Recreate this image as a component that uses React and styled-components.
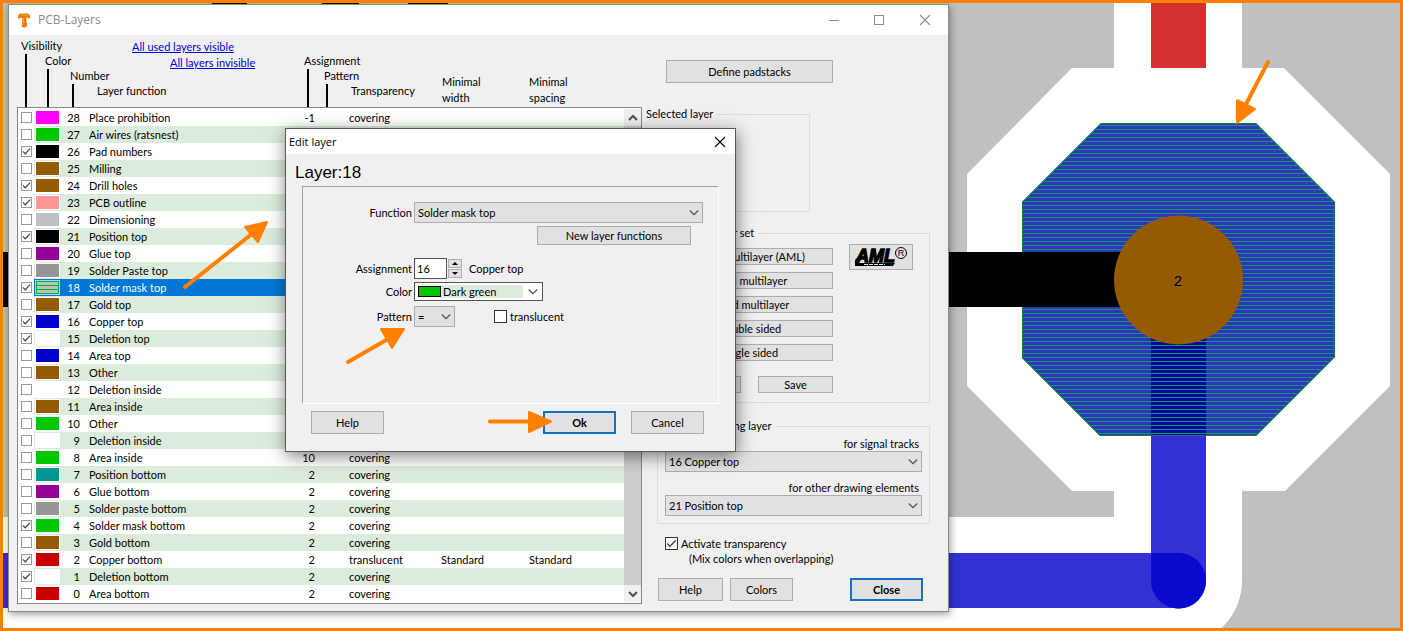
import React from "react";
import styled, { createGlobalStyle, css } from "styled-components";

const GlobalStyle = createGlobalStyle`
  *, *::before, *::after { box-sizing: border-box; }
  body {
    margin: 0;
    background: #c0c0c0;
    font: 11px/14px Lato, "Liberation Sans", Arial, sans-serif;
    color: #000;
  }
  button, input, select { font: inherit; color: inherit; margin: 0; }
`;

const ACCENT = "#ff8000";

/* ---------- desktop ---------- */

const Desktop = styled.main`
  position: relative;
  min-height: 100vh;
  border: 3px solid ${ACCENT};
  background: #c0c0c0;
  overflow: hidden;
`;

const Layer = styled.svg`
  position: absolute;
  left: -3px;
  top: -3px;
  width: calc(100% + 6px);
  height: calc(100% + 6px);
  pointer-events: none;
  font-family: "Liberation Sans", Arial, sans-serif;
`;

const Window = styled.section`
  position: absolute;
  left: ${(p) => p.$x}px;
  top: ${(p) => p.$y}px;
  width: ${(p) => p.$width}px;
  border: 1px solid ${(p) => (p.$active ? "#5a5a5a" : "#8a8a8a")};
  background: #f0f0f0;
  box-shadow: ${(p) =>
    p.$active ? "1px 4px 16px rgba(0, 0, 0, 0.5)" : "1px 2px 8px rgba(0, 0, 0, 0.4)"};
`;

const TitleBar = styled.header`
  display: flex;
  align-items: center;
  height: ${(p) => p.$height}px;
  padding-left: ${(p) => p.$inset}px;
  gap: 7px;
  background: #fff;
`;

const TitleText = styled.h1`
  flex: 1;
  margin: 0;
  font: ${(p) => p.$size}px/16px "Open Sans", "Noto Sans", sans-serif;
  color: ${(p) => (p.$dim ? "#8c8c8c" : "#000")};
`;

const CaptionButtons = styled.div`
  display: flex;
  align-self: stretch;
`;

const CaptionButton = styled.button`
  display: grid;
  place-items: center;
  width: ${(p) => p.$width}px;
  height: 100%;
  padding: 0;
  border: 0;
  background: none;
  color: ${(p) => (p.$dim ? "#8c8c8c" : "#000")};
`;

/* ---------- shared controls ---------- */

const Button = styled.button`
  height: ${(p) => p.$height || 23}px;
  width: ${(p) => (p.$width ? p.$width + "px" : "auto")};
  padding: 0;
  border: 1px solid #adadad;
  background: #e1e1e1;
  line-height: 14px;
  ${(p) =>
    p.$primary &&
    css`
      border: 2px solid #0f73c8;
      font-weight: bold;
    `}
`;

const CheckWrap = styled.span`
  display: inline-grid;
  width: ${(p) => p.$size}px;
  height: ${(p) => p.$size}px;
  vertical-align: top;
  & > * {
    grid-area: 1 / 1;
  }
  svg {
    pointer-events: none;
  }
`;

const CheckInput = styled.input`
  appearance: none;
  width: 100%;
  height: 100%;
  border: 1px solid ${(p) => (p.$soft ? "#999" : "#333")};
  background: #fff;
`;

const SelectWrap = styled.span`
  display: flex;
  align-items: center;
  position: relative;
  width: ${(p) => (p.$width ? p.$width + "px" : "100%")};
  height: 21px;
`;

const SelectInput = styled.select`
  appearance: none;
  width: 100%;
  height: 100%;
  padding: 0 20px 0 3px;
  border: 1px solid #adadad;
  border-radius: 0;
  background: #e1e1e1;
`;

const SelectArrow = styled.span`
  position: absolute;
  right: 4px;
  top: 7px;
  line-height: 0;
  pointer-events: none;
`;

const Chevron = () => (
  <svg width="10" height="8" viewBox="0 0 10 8" fill="none" stroke="#505050" strokeWidth="1.2">
    <path d="M0.8 1.5 5 5.7 9.2 1.5" />
  </svg>
);

function Check({ id, size = 13, soft, on, label }) {
  return (
    <CheckWrap $size={size}>
      <CheckInput id={id} type="checkbox" $soft={soft} defaultChecked={on} aria-label={label} />
      {on && (
        <svg viewBox="0 0 13 13" fill="none" stroke="#444" strokeWidth="1.4">
          <path d="M2.3 6.4 5 9.2 10.8 3.2" />
        </svg>
      )}
    </CheckWrap>
  );
}

function Select({ id, width, value }) {
  return (
    <SelectWrap $width={width}>
      <SelectInput id={id} defaultValue={value}>
        <option>{value}</option>
      </SelectInput>
      <SelectArrow>
        <Chevron />
      </SelectArrow>
    </SelectWrap>
  );
}

/* ---------- layer window ---------- */

const Body = styled.div`
  display: flex;
  padding: 0 18px 7px 8px;
`;

const ListPane = styled.div`
  width: 625px;
`;

const ListHead = styled.div`
  display: grid;
  grid-template-columns: 24px 25px 27px 207px 20px 27px 91px 87px 1fr;
  align-items: end;
  height: 72px;
  padding-left: 4px;
  line-height: 16px;
  white-space: nowrap;
`;

const HeadCell = styled.div`
  width: 0;
  padding-bottom: ${(p) => p.$gap || 0}px;
  &::after {
    content: "";
    display: ${(p) => (p.$stem ? "block" : "none")};
    width: 2px;
    height: ${(p) => p.$stem || 0}px;
    margin-left: ${(p) => p.$inset || 2}px;
    background: #000;
  }
`;

const HeadLinks = styled.nav`
  display: flex;
  flex-direction: column;
  padding-bottom: 12px;
`;

const HeadLink = styled.a`
  margin-left: ${(p) => p.$indent}px;
  color: #0000e0;
  text-decoration: underline;
`;

const ListBox = styled.div`
  display: flex;
  border: 1px solid #828790;
  padding: 1px 0;
  background: #fff;
`;

const Table = styled.table`
  flex: 1;
  table-layout: fixed;
  border-collapse: collapse;
  width: 0;
  td {
    height: 17px;
    padding: 0;
    line-height: 17px;
    white-space: nowrap;
  }
`;

const Row = styled.tr`
  td:not(:first-child) {
    background: ${(p) => (p.$selected ? "#0078d7" : p.$band ? "#dcecdc" : "#fff")};
    color: ${(p) => (p.$selected ? "#fff" : "#000")};
  }
`;

const TickCell = styled.td`
  && {
    padding: 0 0 0 3px;
    line-height: 11px;
  }
`;

const NumCell = styled.td`
  text-align: right;
`;

const TextCell = styled.td`
  && {
    padding-left: ${(p) => p.$inset}px;
  }
`;

const Swatch = styled.span`
  display: block;
  width: 25px;
  height: 15px;
  margin-left: 1px;
  border: 1px solid #fff;
  background: ${(p) => p.$color};
`;

const PatternSwatch = styled.span`
  display: block;
  width: 23px;
  height: 13px;
  margin-left: 2px;
  border: 1px solid #00b428;
  outline: 1px solid #a8d4f0;
  background: repeating-linear-gradient(#c0c0c0 0 3px, #00b428 3px 4px);
`;

const ScrollBar = styled.div`
  display: flex;
  flex-direction: column;
  width: 17px;
  background: #f0f0f0;
`;

const ScrollButton = styled.button`
  display: grid;
  place-items: center;
  height: 17px;
  padding: 0;
  border: 0;
  background: #f0f0f0;
`;

const ScrollThumb = styled.div`
  flex: 1;
  background: #cdcdcd;
`;

const SidePane = styled.div`
  flex: 1;
  display: flex;
  flex-direction: column;
  padding-top: 25px;
`;

const PadstackButton = styled(Button)`
  margin-left: 24px;
`;

const Group = styled.fieldset`
  min-width: 0;
  margin: 0;
  padding: 0;
  border: 1px solid #dcdcdc;
  legend {
    padding: 0 4px 0 2px;
    line-height: 14px;
  }
`;

const SelectedGroup = styled(Group)`
  width: 168px;
  height: 105px;
  margin-top: 24px;
  border-left: 0;
  legend {
    margin-left: 2px;
  }
`;

const SetGroup = styled(Group)`
  margin: 14px 0 0 15px;
  padding: 4px 16px 9px 8px;
  legend {
    margin-left: 7px;
  }
`;

const SetGrid = styled.div`
  display: flex;
  justify-content: space-between;
  align-items: flex-start;
`;

const SetButtons = styled.div`
  display: flex;
  flex-direction: column;
  gap: 7px;
  width: 167px;
  padding-top: 4px;
`;

const FileButtons = styled.div`
  display: flex;
  justify-content: space-between;
  margin-top: 8px;
`;

const LogoButton = styled(Button)`
  line-height: 0;
  font-family: "Liberation Sans", Arial, sans-serif;
`;

const DrawGroup = styled(Group)`
  display: block;
  margin: 16px 0 0 15px;
  padding: 4px 7px 7px 7px;
  legend {
    margin-left: 0;
  }
`;

const DrawLabel = styled.label`
  display: block;
  margin-top: ${(p) => p.$gap || 0}px;
  padding-right: 3px;
  text-align: right;
`;

const TickLine = styled.label`
  display: flex;
  gap: 3px;
  margin: 13px 0 0 23px;
`;

const TickNote = styled.p`
  margin: 1px 0 12px 47px;
`;

const Footer = styled.footer`
  display: flex;
  gap: 7px;
  margin-left: 16px;
  padding-right: 7px;
  button:last-child {
    margin-left: auto;
  }
`;

/* ---------- edit dialog ---------- */

const DialogHeading = styled.h2`
  margin: 8px 0 3px 9px;
  font-size: 17px;
  font-weight: normal;
  line-height: 21px;
  font-family: "Liberation Sans", Arial, sans-serif;
`;

const Panel = styled.form`
  height: 218px;
  margin: 0 16px;
  padding-top: 15px;
  border: 1px solid;
  border-color: #a0a0a0 #fff #fff #a0a0a0;
`;

const Field = styled.div`
  display: flex;
  align-items: center;
  margin-bottom: ${(p) => p.$gap}px;
`;

const FieldLabel = styled.label`
  width: 109px;
  margin-right: 2px;
  text-align: right;
`;

const NewButtonRow = styled.div`
  display: flex;
  justify-content: flex-end;
  margin-bottom: 13px;
  padding-right: 27px;
`;

const NumberInput = styled.input`
  width: 33px;
  height: 21px;
  padding: 0 2px;
  border: 1px solid #555;
  background: #fff;
`;

const Spinner = styled.span`
  display: flex;
  flex-direction: column;
  gap: 1px;
  margin: 0 7px 0 1px;
`;

const SpinButton = styled(Button)`
  display: grid;
  place-items: center;
`;

const ColorSelect = styled.span`
  display: flex;
  align-items: center;
  width: 129px;
  height: 19px;
  padding: 0 4px 0 3px;
  border: 1px solid #555;
  background: #fff;
  select {
    appearance: none;
    width: 82px;
    height: 13px;
    margin-right: auto;
    padding: 0 2px;
    border: 0;
    border-radius: 0;
    background: #dcecdc;
    line-height: 13px;
  }
`;

const ColorChip = styled.span`
  width: 23px;
  height: 11px;
  border: 1px solid #000;
  background: #00c800;
`;

const Translucent = styled.label`
  display: flex;
  align-items: center;
  gap: 3px;
  margin-left: 39px;
`;

const DialogFooter = styled.footer`
  display: flex;
  gap: 15px;
  padding: 7px 31px 17px 25px;
  button:first-child {
    margin-right: auto;
  }
`;

/* ---------- data ---------- */

const C = {
  magenta: "#ff00ff",
  green: "#00c800",
  black: "#000",
  brown: "#965a00",
  pink: "#ff9696",
  silver: "#c0c0c0",
  purple: "#960096",
  gray: "#969696",
  blue: "#0000c8",
  white: "#fff",
  teal: "#009696",
  red: "#c80000",
};

const LAYERS = [
  [28, "Place prohibition", C.magenta, 0, "-1"],
  [27, "Air wires (ratsnest)", C.green, 0],
  [26, "Pad numbers", C.black, 1],
  [25, "Milling", C.brown, 0],
  [24, "Drill holes", C.brown, 1],
  [23, "PCB outline", C.pink, 1],
  [22, "Dimensioning", C.silver, 0],
  [21, "Position top", C.black, 1],
  [20, "Glue top", C.purple, 0],
  [19, "Solder Paste top", C.gray, 0],
  [18, "Solder mask top", "pattern", 1],
  [17, "Gold top", C.brown, 0],
  [16, "Copper top", C.blue, 1],
  [15, "Deletion top", C.white, 1],
  [14, "Area top", C.blue, 0],
  [13, "Other", C.brown, 0],
  [12, "Deletion inside", C.white, 0],
  [11, "Area inside", C.brown, 0],
  [10, "Other", C.green, 0],
  [9, "Deletion inside", C.white, 0],
  [8, "Area inside", C.green, 0, "10"],
  [7, "Position bottom", C.teal, 0, "2"],
  [6, "Glue bottom", C.purple, 0, "2"],
  [5, "Solder paste bottom", C.gray, 0, "2"],
  [4, "Solder mask bottom", C.green, 1, "2"],
  [3, "Gold bottom", C.brown, 0, "2"],
  [2, "Copper bottom", C.red, 1, "2", "translucent", "Standard"],
  [1, "Deletion bottom", C.white, 1, "2"],
  [0, "Area bottom", C.red, 0, "2"],
];

const SETS = [
  "Smart multilayer (AML)",
  "4fold multilayer",
  "6-fold multilayer",
  "Double sided",
  "Single sided",
];

/* ---------- drawings ---------- */

const OCTAGON = "1101,123 1256,123 1335,202 1335,357 1256,436 1100,436 1022,358 1022,202";

const HATCH = Array.from({ length: 78 }, (_, i) => 125 + i * 4);

function Board() {
  return (
    <Layer aria-label="Circuit board">
      <defs>
        <clipPath id="pad">
          <polygon points={OCTAGON} />
        </clipPath>
      </defs>
      <g fill="#fff">
        <rect y="517" width="1178" height="128" />
        <rect x="1114" width="128" height="581" />
        <circle cx="1178" cy="581" r="64" />
        <polygon points="1072,68 1284,68 1390,174 1390,386 1285,491 1072,491 967,386 967,174" />
      </g>
      <rect x="1151" width="55" height="68" fill="#d23232" />
      <rect x="212" width="35" height="8" />
      <rect x="322" width="37" height="8" />
      <rect x="408" width="40" height="8" />
      <polygon points={OCTAGON} fill="#2a37be" />
      <path d="M0 553H1178A27.5 27.5 0 0 1 1178 608H0Z" fill="#3232d2" />
      <path d="M1151 330H1206V581A27.5 27.5 0 0 1 1151 581Z" fill="#3232d2" />
      <path d="M1151 553H1178A27.5 27.5 0 0 1 1206 581A27.5 27.5 0 0 1 1151 581Z" fill="#0a0acc" />
      <g clipPath="url(#pad)">
        <rect x="1151" y="330" width="55" height="106" fill="#0606a0" />
        {HATCH.map((y) => (
          <rect key={y} x="1022" y={y} width="313" height="1" fill="#1c9660" />
        ))}
        <polygon points={OCTAGON} fill="none" stroke="#0f8048" strokeWidth="2" />
      </g>
      <rect y="252" width="1150" height="55" />
      <circle cx="1178.5" cy="280" r="64.5" fill="#965a00" />
      <text x="1178" y="286" textAnchor="middle" fontSize="15">
        2
      </text>
    </Layer>
  );
}

function Arrows() {
  return (
    <Layer
      aria-hidden="true"
      fill={ACCENT}
      stroke={ACCENT}
      strokeWidth="4"
      strokeLinecap="round"
      strokeLinejoin="round"
    >
      <path d="M185 287 253 233" />
      <path d="M267 222 245 227 258 242Z" strokeWidth="2" />
      <path d="M348 362 388 339" />
      <path d="M404 329 381 329 392 348Z" strokeWidth="2" />
      <path d="M490 421.5H532" />
      <path d="M551 421.5 529 412V432Z" strokeWidth="2" />
      <path d="M1268 62 1245 106" />
      <path d="M1237 123V100L1255 109Z" strokeWidth="2" />
    </Layer>
  );
}

const AppIcon = () => (
  <svg width="14" height="15" viewBox="0 0 14 15" fill="#f07800">
    <path d="M1.500 1.600 3.500 .5H10.500L13 2.200 13.300 5.200 11.800 5.600 10.400 4.600H9.400L9.200 8 10 10.800V13.600L7.500 14.400 4.600 13.700 5.300 8.500 5.200 4.800 3.600 4.700 2.300 5.800 .8 5Z" />
    <path d="M4 2H10M6.500 5V12" stroke="#ff9a30" fill="none" />
  </svg>
);

const AmlLogo = () => (
  <svg width="60" height="24" viewBox="0 0 60 24" role="img" aria-label="AML">
    <text x="5" y="17" fontSize="18" fontWeight="bold" fontStyle="italic" stroke="#000" strokeWidth="1.4">
      AML
    </text>
    <path d="M4 21V15L8 11 11 13 8 18H44L42 21Z" />
    <path d="M13 19.5H34" stroke="#e1e1e1" strokeDasharray="4 1" />
    <circle cx="50" cy="8" r="5.5" fill="none" stroke="#000" />
    <text x="50" y="11" fontSize="9" textAnchor="middle">
      R
    </text>
  </svg>
);

const CloseGlyph = () => (
  <svg width="12" height="12" viewBox="0 0 12 12" stroke="currentColor" strokeWidth="1.1">
    <path d="M1 1 11 11M11 1 1 11" />
  </svg>
);

/* ---------- windows ---------- */

function LayerRow({ layer, index }) {
  const [number, name, color, on, assigned = "2", transparency = "covering", minimal = ""] = layer;
  const selected = number === 18;
  return (
    <Row $band={index % 2 === 1} $selected={selected}>
      <TickCell>
        <Check size={11} soft on={!!on} label={`${name} ${number}`} />
      </TickCell>
      <td>{color === "pattern" ? <PatternSwatch /> : <Swatch $color={color} />}</td>
      <NumCell>{number}</NumCell>
      <TextCell $inset={9}>{name}</TextCell>
      <NumCell>{assigned}</NumCell>
      <TextCell $inset={34}>{transparency}</TextCell>
      <TextCell $inset={9}>{minimal}</TextCell>
      <TextCell $inset={9}>{minimal}</TextCell>
    </Row>
  );
}

function LayerList() {
  return (
    <ListPane>
      <ListHead>
        <HeadCell $stem={53} $inset={4}>Visibility</HeadCell>
        <HeadCell $stem={38}>Color</HeadCell>
        <HeadCell $stem={23}>Number</HeadCell>
        <div>
          <HeadLinks>
            <HeadLink href="#visible" $indent={35}>All used layers visible</HeadLink>
            <HeadLink href="#invisible" $indent={73}>All layers invisible</HeadLink>
          </HeadLinks>
          <HeadCell $gap={8}>Layer function</HeadCell>
        </div>
        <HeadCell $stem={38} $inset={3}>Assignment</HeadCell>
        <HeadCell $stem={23}>Pattern</HeadCell>
        <HeadCell $gap={8}>Transparency</HeadCell>
        <HeadCell $gap={1}>Minimal<br />width</HeadCell>
        <HeadCell $gap={1}>Minimal<br />spacing</HeadCell>
      </ListHead>
      <ListBox>
        <Table>
          <colgroup>
            <col width="16" />
            <col width="26" />
            <col width="20" />
            <col width="204" />
            <col width="31" />
            <col width="117" />
            <col width="88" />
            <col />
          </colgroup>
          <tbody>
            {LAYERS.map((layer, i) => (
              <LayerRow key={layer[0]} layer={layer} index={i} />
            ))}
          </tbody>
        </Table>
        <ScrollBar>
          <ScrollButton aria-label="Scroll up">
            <svg width="10" height="8" viewBox="0 0 10 8" fill="none" stroke="#505050" strokeWidth="2">
              <path d="M1 6 5 2 9 6" />
            </svg>
          </ScrollButton>
          <ScrollThumb />
          <ScrollButton aria-label="Scroll down">
            <svg width="10" height="8" viewBox="0 0 10 8" fill="none" stroke="#505050" strokeWidth="2">
              <path d="M1 2 5 6 9 2" />
            </svg>
          </ScrollButton>
        </ScrollBar>
      </ListBox>
    </ListPane>
  );
}

function LayersWindow() {
  return (
    <Window $x={5} $y={1} $width={941}>
      <TitleBar $height={30} $inset={8}>
        <AppIcon />
        <TitleText $size={12} $dim>PCB-Layers</TitleText>
        <CaptionButtons>
          <CaptionButton $width={45} $dim aria-label="Minimize">
            <svg width="10" height="10" viewBox="0 0 10 10" stroke="currentColor">
              <path d="M0 5.5H10" />
            </svg>
          </CaptionButton>
          <CaptionButton $width={46} $dim aria-label="Maximize">
            <svg width="10" height="10" viewBox="0 0 10 10" fill="none" stroke="currentColor">
              <rect x=".5" y=".5" width="9" height="9" />
            </svg>
          </CaptionButton>
          <CaptionButton $width={46} $dim aria-label="Close">
            <CloseGlyph />
          </CaptionButton>
        </CaptionButtons>
      </TitleBar>
      <Body>
        <LayerList />
        <SidePane>
          <PadstackButton $width={167}>Define padstacks</PadstackButton>
          <SelectedGroup>
            <legend>Selected layer</legend>
          </SelectedGroup>
          <SetGroup>
            <legend>Default layer set</legend>
            <SetGrid>
              <SetButtons>
                {SETS.map((name) => (
                  <Button key={name} $height={17}>{name}</Button>
                ))}
                <FileButtons>
                  <Button $height={17} $width={75}>Load</Button>
                  <Button $height={17} $width={75}>Save</Button>
                </FileButtons>
              </SetButtons>
              <LogoButton $width={64} $height={26}>
                <AmlLogo />
              </LogoButton>
            </SetGrid>
          </SetGroup>
          <DrawGroup>
            <legend>Current drawing layer</legend>
            <DrawLabel htmlFor="tracks">for signal tracks</DrawLabel>
            <Select id="tracks" value="16 Copper top" />
            <DrawLabel htmlFor="elements" $gap={9}>for other drawing elements</DrawLabel>
            <Select id="elements" value="21 Position top" />
          </DrawGroup>
          <TickLine>
            <Check on />
            Activate transparency
          </TickLine>
          <TickNote>(Mix colors when overlapping)</TickNote>
          <Footer>
            <Button $width={65}>Help</Button>
            <Button $width={63}>Colors</Button>
            <Button $width={73} $primary>Close</Button>
          </Footer>
        </SidePane>
      </Body>
    </Window>
  );
}

function EditDialog() {
  return (
    <Window as="div" role="dialog" aria-label="Edit layer" $x={282} $y={125} $width={451} $active>
      <TitleBar $height={25} $inset={3}>
        <TitleText $size={11}>Edit layer</TitleText>
        <CaptionButton $width={31} aria-label="Close">
          <CloseGlyph />
        </CaptionButton>
      </TitleBar>
      <DialogHeading>Layer:18</DialogHeading>
      <Panel>
        <Field $gap={3}>
          <FieldLabel htmlFor="function">Function</FieldLabel>
          <Select id="function" width={289} value="Solder mask top" />
        </Field>
        <NewButtonRow>
          <Button type="button" $width={154} $height={19}>New layer functions</Button>
        </NewButtonRow>
        <Field $gap={3}>
          <FieldLabel htmlFor="assignment">Assignment</FieldLabel>
          <NumberInput id="assignment" defaultValue="16" />
          <Spinner>
            <SpinButton type="button" $width={14} $height={9} aria-label="Increase">
              <svg width="6" height="3" viewBox="0 0 6 3"><path d="M0 3 3 0 6 3Z" /></svg>
            </SpinButton>
            <SpinButton type="button" $width={14} $height={9} aria-label="Decrease">
              <svg width="6" height="3" viewBox="0 0 6 3"><path d="M0 0 3 3 6 0Z" /></svg>
            </SpinButton>
          </Spinner>
          Copper top
        </Field>
        <Field $gap={5}>
          <FieldLabel htmlFor="color">Color</FieldLabel>
          <ColorSelect>
            <ColorChip />
            <select id="color" defaultValue="Dark green">
              <option>Dark green</option>
            </select>
            <Chevron />
          </ColorSelect>
        </Field>
        <Field $gap={0}>
          <FieldLabel htmlFor="pattern">Pattern</FieldLabel>
          <Select id="pattern" width={41} value="=" />
          <Translucent>
            <Check />
            translucent
          </Translucent>
        </Field>
      </Panel>
      <DialogFooter>
        <Button $width={73}>Help</Button>
        <Button $width={73} $primary>Ok</Button>
        <Button $width={73}>Cancel</Button>
      </DialogFooter>
    </Window>
  );
}

export default function App() {
  return (
    <>
      <GlobalStyle />
      <Desktop>
        <Board />
        <LayersWindow />
        <EditDialog />
        <Arrows />
      </Desktop>
    </>
  );
}
